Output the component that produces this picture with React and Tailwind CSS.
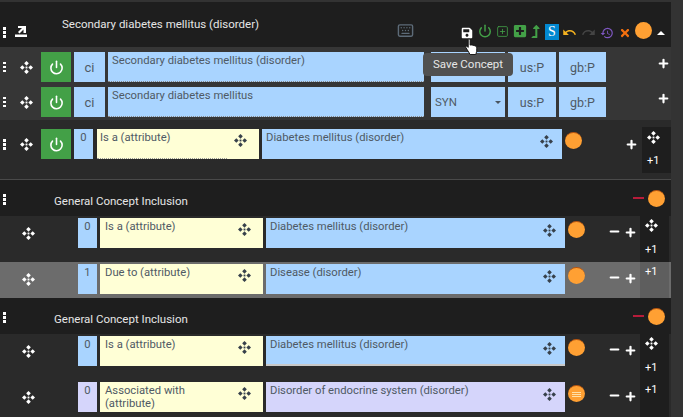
import { Keyboard, Minus, Plus, Power, SquarePlus } from 'lucide-react';
import { FaLevelUpAlt, FaPlusSquare, FaSave, FaTimes } from 'react-icons/fa';
import { MdHistory, MdRedo, MdUndo } from 'react-icons/md';

const MoveIcon = ({ className = 'text-white' }) => (
  <svg viewBox="0 0 14 14" className={`w-[13px] h-[13px] ${className}`} fill="currentColor">
    <path d="M7 0l2.500 2.500L7 5 4.500 2.500zM7 9l2.500 2.500L7 14l-2.500-2.500zM2.500 4.500L5 7l-2.500 2.500L0 7zM11.500 4.500L14 7l-2.500 2.500L9 7z" />
    <rect x="6" y="6" width="2" height="2" />
  </svg>
);

const Grip = () => (
  <div className="w-[3px] flex flex-col gap-[1.500px]">
    <div className="h-[2.500px] bg-white" />
    <div className="h-[2.500px] bg-white" />
    <div className="h-[2.500px] bg-white" />
  </div>
);

const Dot = ({ list }) => (
  <div className="w-[17px] h-[17px] rounded-full bg-[#ffa033] border-t border-[#b5530f] flex flex-col items-center justify-center gap-[1px] shrink-0">
    {list && (
      <>
        <div className="w-[9px] h-[1px] bg-[#ffe0a8]" />
        <div className="w-[9px] h-[1px] bg-[#ffe0a8]" />
        <div className="w-[9px] h-[1px] bg-[#ffe0a8]" />
      </>
    )}
  </div>
);

const Box = ({ className, children }) => (
  <div className={`h-[30px] shrink-0 text-[11.250px] leading-[13px] text-[#4f5a65] ${className}`}>{children}</div>
);

const PowerButton = () => (
  <div className="w-[30px] h-[30px] shrink-0 bg-[#43a047] flex items-center justify-center">
    <Power size={15} strokeWidth={2.500} className="text-white" />
  </div>
);

const DescriptionRow = ({ label, type }) => (
  <div className="h-[30px] flex items-center">
    <div className="w-[20px] pl-[3px] shrink-0">
      <Grip />
    </div>
    <div className="w-[21px] shrink-0">
      <MoveIcon />
    </div>
    <PowerButton />
    <Box className="ml-[3px] w-[31px] bg-[#a9d4ff] flex items-center justify-center !text-[13px]">ci</Box>
    <Box className="ml-[3px] w-[316px] bg-[#a9d4ff] px-[4px] pt-[2px] border-b border-dotted border-[#8a8a8a]">{label}</Box>
    <Box className="ml-[7px] w-[74px] bg-[#a9d4ff] px-[4px] flex items-center justify-between !text-[11.500px]">
      <span>{type}</span>
      <div className="w-0 h-0 border-x-[3px] border-x-transparent border-t-[3px] border-t-[#4a5560]" />
    </Box>
    <Box className="ml-[3px] w-[48px] bg-[#a9d4ff] flex items-center justify-center !text-[12.500px]">us:P</Box>
    <Box className="ml-[3px] w-[47px] bg-[#a9d4ff] flex items-center justify-center !text-[12.500px]">gb:P</Box>
    <Plus size={13} strokeWidth={4} className="ml-[51px] -mt-[8px] text-white shrink-0" />
  </div>
);

const AttrRow = ({ n, type, target, tone = 'blue', list, lit, tall, move = true, h = 46 }) => {
  const blue = tone === 'blue' ? 'bg-[#a9d4ff]' : 'bg-[#d5d5fb]';
  return (
    <div className={`flex items-start ${h === 46 ? 'h-[46px]' : h === 37 ? 'h-[37px]' : 'h-[36px]'} ${lit ? 'bg-[#6c6c6c]' : 'bg-[#2a2a2a]'}`}>
      <div className="w-[78px] h-[30px] mt-[2px] shrink-0 pl-[22px] flex items-center">
        <MoveIcon />
      </div>
      <Box className={`mt-[2px] w-[19px] ${blue} pt-[2px] text-center`}>{n}</Box>
      <Box className="mt-[2px] ml-[3px] w-[163px] bg-[#ffffd6] pl-[5px] pr-[40px] pt-[2px] relative">
        {type}
        <div className="absolute right-[12px] top-[5px]">
          <MoveIcon className="text-[#37414b]" />
        </div>
      </Box>
      <Box className={`mt-[2px] ml-[3px] w-[299px] ${blue} pl-[4px] pt-[2px] relative ${tall ? 'border-b-2 border-[#c8c8c8]' : ''}`}>
        {target}
        <div className="absolute right-[9px] top-[6px]">
          <MoveIcon className="text-[#37414b]" />
        </div>
      </Box>
      <div className="ml-[3px] mt-[5px]">
        <Dot list={list} />
      </div>
      <Minus size={13} strokeWidth={4} className="ml-[23px] mt-[9px] text-white shrink-0" />
      <Plus size={13} strokeWidth={4} className="ml-[3px] mt-[10px] text-white shrink-0" />
      <div className={`ml-[3px] w-[29px] h-full shrink-0 flex flex-col items-start pl-[5px] ${lit ? 'bg-[#5e5e5e]' : 'bg-[#1e1e1e]'}`}>
        {move && (
          <div className="mt-[3px] h-[23px]">
            <MoveIcon />
          </div>
        )}
        <span className={`text-[11px] leading-[13px] text-white ${move ? 'mt-[1px]' : 'mt-[3px]'}`}>+1</span>
      </div>
    </div>
  );
};

const InclusionHeader = () => (
  <div className="h-[36px] bg-[#1e1e1e] flex items-center relative">
    <div className="absolute left-[3px] top-[14px]">
      <Grip />
    </div>
    <span className="ml-[54px] mt-[8px] text-[11.500px] text-[#e6e6e6]">General Concept Inclusion</span>
    <div className="ml-auto mr-[6px] flex items-center gap-[4px]">
      <div className="w-[11px] h-[2.500px] bg-[#b71c3a]" />
      <Dot />
    </div>
  </div>
);

export default function App() {
  return (
    <div className="w-[683px] h-[417px] overflow-hidden bg-[#333333] relative font-['Roboto',sans-serif] pt-[2px]">
      <div className="w-[671px]">
        {/* Concept header */}
        <div className="h-[45px] bg-[#1e1e1e] flex items-center relative">
          <div className="absolute left-[3px] top-[25px]">
            <Grip />
          </div>
          <svg viewBox="0 0 12 12" className="absolute left-[15px] top-[23px] w-[12px] h-[12px] text-white" fill="currentColor">
            <path d="M0 9.500h12V12H0zM3 1h8v7H8.500V4.500L4.500 8.500 3 7l4-4H3z" />
          </svg>
          <span className="ml-[62px] mt-[1px] text-[11.500px] text-[#e6e6e6]">Secondary diabetes mellitus (disorder)</span>
          <Keyboard size={17} className="absolute left-[397px] top-[20px] text-[#5d6b78]" />
          <div className="absolute left-[461px] top-[22px] flex items-center h-[17px]">
            <FaSave size={12} className="text-white" />
            <Power size={14} strokeWidth={2.500} className="ml-[5px] -mt-[3px] text-[#43a047]" />
            <SquarePlus size={13} strokeWidth={1.500} className="ml-[4px] -mt-[3px] text-[#43a047]" />
            <FaPlusSquare size={14} className="ml-[4px] -mt-[3px] text-[#43a047]" />
            <FaLevelUpAlt size={13} className="ml-[2px] -mt-[3px] text-[#43a047]" />
            <div className="ml-[3px] -mt-[2px] w-[14px] h-[16px] bg-[#0288d1] text-white font-['Liberation_Serif',serif] text-[14px] leading-[16px] text-center">S</div>
            <MdUndo size={15} className="ml-[3px] text-[#f5b21f]" />
            <MdRedo size={15} className="ml-[4px] text-[#444444]" />
            <MdHistory size={14} className="ml-[4px] text-[#7e57c2]" />
            <FaTimes size={12} className="ml-[5px] text-[#f4700f]" />
            <div className="ml-[4px] -mt-[4px] w-[17px] h-[17px] rounded-full bg-[#ffa033] shrink-0" />
            <div className="ml-[5px] w-0 h-0 border-x-[4px] border-x-transparent border-b-[4px] border-b-white" />
          </div>
        </div>

        {/* Descriptions */}
        <div className="h-[73px] bg-[#363636] pt-[5px] flex flex-col gap-[5px]">
          <DescriptionRow label="Secondary diabetes mellitus (disorder)" type="" />
          <DescriptionRow label="Secondary diabetes mellitus" type="SYN" />
        </div>

        {/* Stated relationship */}
        <div className="h-[60px] bg-[#2a2a2a] border-b border-[#4a4a4a] flex items-start relative">
          <div className="w-[20px] pl-[3px] mt-[19px] shrink-0">
            <Grip />
          </div>
          <div className="w-[21px] mt-[18px] shrink-0">
            <MoveIcon />
          </div>
          <div className="mt-[9px] flex items-start">
            <PowerButton />
            <Box className="ml-[3px] w-[19px] bg-[#a9d4ff] pt-[2px] text-center">0</Box>
            <Box className="ml-[4px] w-[162px] bg-[#ffffd6] pl-[3px] pt-[2px] relative">
              Is a (attribute)
              <div className="absolute left-0 bottom-0 w-[130px] border-b border-dotted border-[#999999]" />
              <div className="absolute right-[12px] top-[5px]">
                <MoveIcon className="text-[#37414b]" />
              </div>
            </Box>
            <Box className="ml-[3px] w-[300px] bg-[#a9d4ff] pl-[4px] pt-[2px] relative">
              Diabetes mellitus (disorder)
              <div className="absolute right-[9px] top-[6px]">
                <MoveIcon className="text-[#37414b]" />
              </div>
            </Box>
            <div className="ml-[3px] mt-[3px]">
              <Dot />
            </div>
            <Plus size={13} strokeWidth={4} className="ml-[43px] mt-[9px] text-white shrink-0" />
          </div>
          <div className="ml-[4px] mt-[7px] w-[29px] h-[46px] bg-[#1e1e1e] flex flex-col items-start pl-[5px] pt-[4px]">
            <MoveIcon />
            <span className="mt-[10px] text-[11px] leading-[13px] text-white">+1</span>
          </div>
        </div>

        <InclusionHeader />
        <AttrRow n="0" type="Is a (attribute)" target="Diabetes mellitus (disorder)" />
        <AttrRow n="1" type="Due to (attribute)" target="Disease (disorder)" lit move={false} h={36} />
        <InclusionHeader />
        <AttrRow n="0" type="Is a (attribute)" target="Diabetes mellitus (disorder)" tall />
        <AttrRow n="0" type="Associated with (attribute)" target="Disorder of endocrine system (disorder)" tone="purple" list move={false} h={37} />
      </div>

      {/* Tooltip + pointer over the save icon */}
      <div className="absolute left-[423px] top-[53px] w-[90px] h-[23px] rounded-[4px] bg-[#505050] text-[#e6e6e6] text-[11.500px] flex items-center justify-center">
        Save Concept
      </div>
      <svg viewBox="0 0 14 18" className="absolute left-[465px] top-[38px] w-[14px] h-[17px]">
        <path d="M3 1.500c1-.8 2 0 2 1v5l1-.2 1 .1 1 .2 2 .6c1.500.5 2 1.300 2 2.800v3l-1 3.500H5l-3-5-1.500-2.500c-.3-1 .7-1.700 1.500-1l1 1z" fill="#fff" stroke="#111" strokeWidth="1" />
      </svg>
    </div>
  );
}
